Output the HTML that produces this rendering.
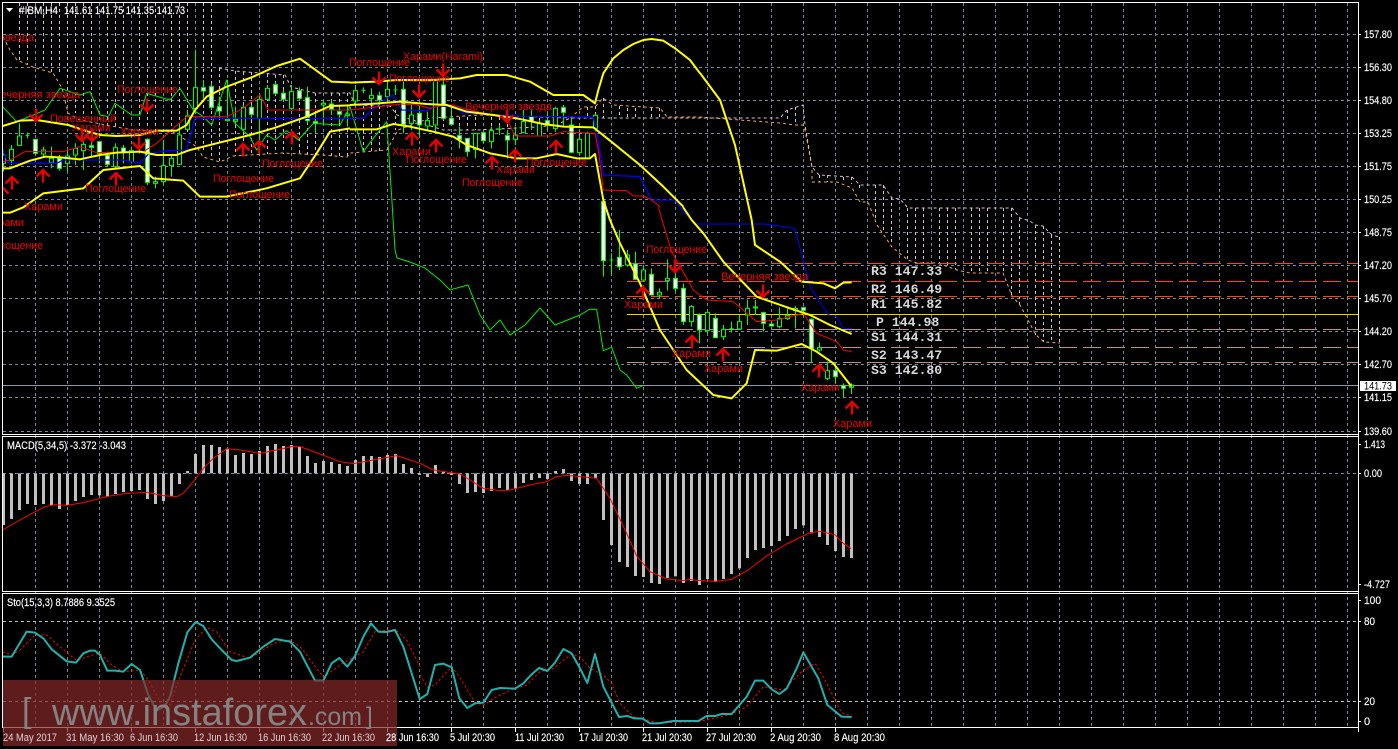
<!DOCTYPE html>
<html><head><meta charset="utf-8"><title>IBM H4</title>
<style>
html,body{margin:0;padding:0;background:#000;width:1398px;height:749px;overflow:hidden}
svg{display:block;position:absolute;left:0;top:0}
text{font-family:"Liberation Sans","Noto Sans CJK JP",sans-serif}
.p{fill:#fff;font-size:11px;stroke:#fff;stroke-width:.15px}
.r{fill:#f00000;font-size:11px}
.m{font-family:"Liberation Mono",monospace;font-weight:bold;font-size:13.2px;fill:#d8d8d8;white-space:pre}
</style></head><body>
<svg width="1398" height="749" viewBox="0 0 1398 749" xmlns="http://www.w3.org/2000/svg">
<defs>
<clipPath id="c1"><rect x="3" y="3" width="1355" height="431"/></clipPath>
<path id="u" d="M0-6.5V6.5M-6.5 .5L0-6L6.5 .5"/>
<path id="d" d="M0 6.5V-6.5M-6.5 -.5L0 6L6.5 -.5"/>
</defs>
<rect width="1398" height="749" fill="#000"/>

<!-- grid -->
<g fill="none" stroke="#778899" stroke-width="1" stroke-dasharray="3 3" shape-rendering="crispEdges">
<path d="M35.5 3V727M67.5 3V727M99.5 3V727M131.5 3V727M163.5 3V727M195.5 3V727M227.5 3V727M259.5 3V727M291.5 3V727M323.5 3V727M355.5 3V727M387.5 3V727M419.5 3V727M451.5 3V727M483.5 3V727M515.5 3V727M547.5 3V727M579.5 3V727M611.5 3V727M643.5 3V727M675.5 3V727M707.5 3V727M739.5 3V727M771.5 3V727M803.5 3V727M835.5 3V727M867.5 3V727M899.5 3V727M931.5 3V727M963.5 3V727M995.5 3V727M1027.5 3V727M1059.5 3V727M1091.5 3V727M1123.5 3V727M1155.5 3V727M1187.5 3V727M1219.5 3V727M1251.5 3V727M1283.5 3V727M1315.5 3V727M1347.5 3V727"/>
<path d="M3 34.5H1358M3 67.5H1358M3 100.5H1358M3 133.5H1358M3 166.5H1358M3 199.5H1358M3 232.5H1358M3 265.5H1358M3 298.5H1358M3 331.5H1358M3 364.5H1358M3 397.5H1358M3 431.5H1358M3 473.5H1358"/>
<path d="M3 621.5H1358M3 701.5H1358" stroke="#c0c0c0"/>
</g>

<g clip-path="url(#c1)">
<!-- cloud hatches -->
<path fill="none" stroke="#d8bfd8" stroke-width="1" stroke-dasharray="3 3" shape-rendering="crispEdges" d="M19.5 3V60M27.5 3V64M43.5 3V69M51.5 3V72M59.5 3V75M67.5 3V90M75.5 3V113M83.5 3V118M91.5 3V122M107.5 3V126M115.5 3V127M123.5 3V128M139.5 3V130M147.5 3V131M155.5 3V132M171.5 3V132M179.5 3V133M187.5 3V134M203.5 3V150M211.5 3V157M219.5 68V162M235.5 71V156M243.5 72V155M251.5 72V154M267.5 74V154M275.5 75V154M283.5 75V154M299.5 90V154M307.5 92V155M315.5 93V155M331.5 93V157M339.5 93V157M347.5 93V157M363.5 106V153M371.5 106V152M379.5 106V151M395.5 110V130M403.5 115V128M411.5 117V130M427.5 117V130M435.5 117V130M443.5 118V130M459.5 117V130M467.5 117V130M475.5 117V130M491.5 117V130M499.5 117V130M507.5 118V130M523.5 117V128M531.5 118V128M539.5 118V127M555.5 118V125M563.5 118V123M571.5 117V120M587.5 107V118M595.5 100V118M603.5 98V118M619.5 106V118M627.5 108V118M635.5 108V118M651.5 108V118M659.5 108V118M787.5 110V122M795.5 107V125M819.5 175V182M827.5 175V182M843.5 177V183M851.5 177V184M859.5 185V190M875.5 185V222M883.5 185V232M891.5 197V245M907.5 208V260M915.5 208V263M923.5 208V263M939.5 208V264M947.5 208V266M955.5 208V269M971.5 208V273M979.5 208V273M987.5 208V273M1003.5 208V273M1011.5 208V296M1019.5 218V308M1035.5 225V335M1043.5 226V342M1051.5 235V342M1059.5 237V343"/>
<polyline fill="none" stroke="#f4a460" stroke-width="1" stroke-dasharray="3 3" points="3,37 10,50 17,60 33,67 53,73 62,88 68,113 80,120 133,130 173,132 197,147 203,157 220,162 233,156 283,153 323,155 347,157 350,153 387,150 398,130 430,118 480,115 570,118 583,107 595,107 603,98 613,105 660,108 667,117 700,117 780,123 795,125 803,125 805,130 812,167 812,182 837,182 852,188 860,202 868,202 877,225 892,247 908,260 917,263 937,263 957,270 970,273 1003,273 1012,296 1020,305 1036,335 1044,342 1060,343"/>
<polyline fill="none" stroke="#d8bfd8" stroke-width="1" stroke-dasharray="3 3" points="219,68 235,71 285,75 291,87 315,93 350,93 355,105 390,106 397,115 443,130 477,130 537,127 557,125 570,118 780,118 787,110 803,105 805,125 812,167 819,175 852,177 860,185 883,185 892,198 900,199 908,208 1012,208 1020,218 1030,221 1035,225 1043,226 1052,235 1059,237"/>

<!-- pivot levels -->
<g fill="none" stroke-width="1" shape-rendering="crispEdges" stroke-dasharray="18 6">
<path stroke="#ff4500" d="M627 263.5H1358M627 281.5H1358M627 296.5H1358"/>
<path stroke="#bc8f8f" d="M627 329.5H1358M627 347.5H1358M627 362.5H1358"/>
</g>
<path d="M627 314.5H1358" stroke="#ffcc00" stroke-width="1" shape-rendering="crispEdges"/>
<path d="M3 385.5H1358" stroke="#8b98a6" stroke-width="1" shape-rendering="crispEdges"/>

<!-- candles 1 -->
<g transform="translate(.17,0) scale(.33333)" stroke="#00ff00" stroke-width="3" fill="none">
<path d="M10 450V515M34 435V495M58 370V436M82 398V415M106 418V465M130 440V470M154 440V505M178 465V512M202 450V515M226 430V495M250 425V510M274 418V470M298 425V490M322 455V500M346 430V505M370 435V490M394 440V490M418 420V460M442 415V555M466 530V565M490 420V555M514 465V530M538 370V495M562 330V390M586 150V340M610 240V295M634 250V330M658 290V360M682 240V365M706 320V375M730 315V395M754 315V360M778 285V420M802 255V300M826 245V285M850 270V305M874 255V330M898 262V300M922 260V370M946 340V400M970 300V375M994 300V345M1018 320V370M1042 320V380"/>
<path fill="#fff" d="M100 418h12v42h-12zM172 475h12v30h-12zM268 437h12v5h-12zM292 425h12v35h-12zM316 466h12v27h-12zM364 444h12v12h-12zM436 418h12v129h-12zM604 263h12v10h-12zM628 260h12v62h-12zM652 320h12v13h-12zM748 322h12v21h-12zM820 254h12v26h-12zM844 280h12v18h-12zM892 272h12v23h-12zM916 293h12v69h-12zM940 365h12v5h-12zM988 312h12v15h-12zM1012 335h12v8h-12z"/>
<path fill="#000" d="M4 465h12v25h-12zM28 448h12v34h-12zM52 408h12v28h-12zM76 406h12M124 450h12v12h-12zM148 475h12v13h-12zM196 468h12v22h-12zM220 445h12v20h-12zM244 433h12v19h-12zM340 443h12v57h-12zM388 452h12v33h-12zM412 455h12M460 545h12v5h-12zM484 497h12v48h-12zM508 475h12v22h-12zM532 405h12v88h-12zM556 348h12v40h-12zM580 263h12v62h-12zM676 358h12v4h-12zM700 358h12v6h-12zM724 322h12v66h-12zM772 298h12v57h-12zM796 265h12v33h-12zM868 275h12v50h-12zM964 310h12v5h-12zM1036 342h12v5h-12z"/>
</g>
<!-- candles 2 -->
<g transform="translate(350.5,30) scale(.33333)" stroke="#00ff00" stroke-width="3" fill="none">
<path d="M15 165V225M39 172V190M63 175V225M87 185V225M111 150V215M135 165V195M159 150V310M183 225V300M207 225V320M231 245V300M255 150V305M279 130V270M303 230V285M327 290V355M351 325V380M375 310V385M399 300V340M423 290V355M447 285V315M471 300V385M495 290V345M519 240V310M543 240V300M567 270V320M591 250V300M615 230V305M639 225V290M663 265V370M687 305V375M711 305V385M735 250V305"/>
<path fill="#fff" d="M81 197h12v13h-12zM153 178h12v105h-12zM201 250h12v35h-12zM273 165h12v100h-12zM297 265h12v18h-12zM321 317h12v11h-12zM345 325h12v40h-12zM393 308h12v24h-12zM465 317h12v13h-12zM537 260h12v15h-12zM585 272h12v13h-12zM633 233h12v14h-12zM657 285h12v82h-12z"/>
<path fill="#000" d="M9 182h12v31h-12zM33 181h12M57 197h12v8h-12zM105 178h12v22h-12zM129 180h12M177 255h12v25h-12zM225 272h12v16h-12zM249 152h12v133h-12zM369 310h12v48h-12zM417 302h12v33h-12zM441 298h12M489 315h12v13h-12zM513 275h12v33h-12zM561 280h12v38h-12zM609 235h12v60h-12zM681 328h12v40h-12zM705 310h12v75h-12zM729 256h12v39h-12z"/>
</g>
<!-- candles 3 -->
<g transform="translate(590.5,220) scale(.33333)" stroke="#00ff00" stroke-width="3" fill="none">
<path d="M39 -60V170M63 100V165M87 30V150M111 90V140M135 95V180M159 135V185M183 145V225M207 205V235M231 118V212M255 120V215M279 190V315M303 255V320M327 280V370M351 275V340M375 280V355M399 315V360M423 305V338M447 285V330M471 238V315M495 240V285M519 275V335M543 305V320M567 262V325M591 265V300M615 258V325M639 260V288M663 295V430M687 367V395M711 425V480M735 428V490M759 490V532M783 490V522"/>
<path fill="#fff" d="M33 -55h12v177h-12zM81 112h12v28h-12zM129 132h12v46h-12zM177 163h12v62h-12zM249 175h12v30h-12zM273 205h12v100h-12zM321 285h12v45h-12zM369 295h12v58h-12zM489 261h12v3h-12zM513 278h12v32h-12zM537 312h12v6h-12zM633 263h12v8h-12zM657 298h12v87h-12zM729 452h12v18h-12zM753 497h12v8h-12z"/>
<path fill="#000" d="M57 120h12M105 105h12v30h-12zM153 150h12v30h-12zM201 217h12v8h-12zM225 175h12v7h-12zM297 260h12v45h-12zM345 277h12v55h-12zM393 328h12v22h-12zM417 326h12M441 305h12v22h-12zM465 265h12v20h-12zM561 295h12v25h-12zM585 287h12v9h-12zM609 265h12v7h-12zM681 383h12v7h-12zM705 452h12v23h-12zM777 495h12v7h-12z"/>
</g>

<!-- chikou, red, blue lines + bands : section 1 -->
<g transform="scale(.33333)" fill="none" stroke-linejoin="round">
<polyline stroke="#00ee00" stroke-width="3" points="8,320 50,365 100,345 135,330 180,265 240,285 270,275 300,345 325,350 345,310 395,345 420,345 440,280 510,300 540,265 580,330 610,350 635,375 680,240 705,370 750,410 770,450 800,405 825,420 860,392 895,420 940,370 1020,375 1050,320"/>
<polyline stroke="#0000ff" stroke-width="4" points="8,450 25,490 170,490 190,480 370,480 420,490 445,462 500,452 560,450 585,355 1050,355"/>
<polyline stroke="#ff0000" stroke-width="3" points="8,485 30,480 75,455 190,455 240,440 290,458 430,455 470,430 560,350 680,350 730,325 780,285 805,330 1050,330"/>
<polyline stroke="#ffff00" stroke-width="6" points="8,378 60,362 110,360 160,368 205,375 250,390 300,405 350,408 420,405 470,392 530,392 560,375 585,330 620,290 680,260 760,230 830,198 900,176 940,205 995,245 1050,247"/>
<polyline stroke="#ffff00" stroke-width="6" points="8,505 30,505 90,482 135,470 180,472 240,478 300,465 350,458 420,455 470,465 530,465 570,450 650,430 750,405 820,385 920,350 990,318 1050,316"/>
<polyline stroke="#ffff00" stroke-width="6" points="8,638 30,638 70,622 130,580 250,565 310,510 420,498 460,535 550,542 600,590 680,590 800,565 900,535 950,460 990,395 1050,385"/>
</g>
<!-- section 2 -->
<g transform="translate(350,30) scale(.33333)" fill="none" stroke-linejoin="round">
<polyline stroke="#00ee00" stroke-width="3" points="0,230 40,365 70,325 110,275 125,500 135,660"/>
<polyline stroke="#0000ff" stroke-width="4" points="0,265 40,265 70,235 110,205 130,195 155,240 230,242 260,228 310,230 340,250 500,258 730,262 745,330 760,435 870,440 905,510 975,510 1005,550 1040,582"/>
<polyline stroke="#ff0000" stroke-width="3" points="0,240 155,222 200,225 240,235 280,225 310,225 340,235 470,265 495,318 600,318 640,305 735,310 745,360 760,480 830,482 850,498 880,498 905,510 930,530"/>
<polyline stroke="#ffff00" stroke-width="6" points="0,158 80,155 140,150 240,150 330,145 380,135 470,135 540,155 610,195 700,195 735,220 745,180 760,130 790,85 820,60 850,42 880,30 905,27 940,32 975,55 1020,90 1050,130"/>
<polyline stroke="#ffff00" stroke-width="6" points="0,225 60,222 150,215 230,222 290,225 350,245 430,255 500,265 580,282 640,290 730,292 790,340 870,405 940,470 1000,530"/>
<polyline stroke="#ffff00" stroke-width="6" points="0,298 80,298 130,282 180,290 250,305 310,320 350,345 420,370 500,385 560,385 620,372 680,385 720,385 735,372 760,510 780,570"/>
</g>
<polyline fill="none" stroke="#ffff00" stroke-width="2" points="700,73 720,100 735,145 745,190 751.7,220"/>
<polyline fill="none" stroke="#00ee00" stroke-width="1" points="395,250 397,258 410,262 425,268 440,280 450,290 468,285 480,315 490,330 500,320 510,335 525,325 540,308 555,325 580,315 590,309"/>
<!-- section 3 -->
<g transform="translate(590,220) scale(.33333)" fill="none" stroke-linejoin="round">
<polyline stroke="#00ee00" stroke-width="3" points="0,268 20,268 40,392 65,382 90,450 110,465 140,505 158,497"/>
<polyline stroke="#0000ff" stroke-width="3" points="320,12 525,12 615,25 660,200 715,285 740,290 760,325 785,325"/>
<polyline stroke="#ff0000" stroke-width="3" points="205,-40 216,0 245,95 310,210 350,240 430,245 500,305 560,300 640,280 680,340 740,365 760,390 785,395"/>
<polyline stroke="#ffff00" stroke-width="6" points="485,0 495,75 570,125 635,185 700,190 735,205 760,188 785,187"/>
<polyline stroke="#ffff00" stroke-width="6" points="279,-39 305,0 340,40 400,125 500,230 600,265 660,285 720,315 785,342"/>
<polyline stroke="#ffff00" stroke-width="6" points="60,0 90,70 150,190 210,330 290,450 370,525 425,535 470,490 495,390 560,392 635,372 680,395 730,430 785,500"/>
</g>

<!-- arrows -->
<g fill="none" stroke="#e80000" stroke-width="2.4">
<use href="#u" x="12" y="183"/><use href="#u" x="2" y="193"/><use href="#u" x="43" y="176"/><use href="#u" x="116" y="179"/><use href="#u" x="243" y="150"/><use href="#u" x="259" y="147"/><use href="#u" x="292" y="138"/>
<use href="#d" x="36" y="115"/><use href="#d" x="82" y="135"/><use href="#d" x="92" y="135"/><use href="#d" x="139" y="143"/><use href="#d" x="147" y="105"/>
<use href="#d" x="379" y="78"/><use href="#d" x="419" y="91"/><use href="#d" x="443" y="70"/><use href="#d" x="507" y="116"/>
<use href="#u" x="412" y="139"/><use href="#u" x="436" y="146"/><use href="#u" x="492" y="163"/><use href="#u" x="515" y="156"/><use href="#u" x="556" y="147"/>
<use href="#d" x="675" y="266"/><use href="#d" x="763" y="291"/>
<use href="#u" x="643" y="293"/><use href="#u" x="692" y="342"/><use href="#u" x="723" y="355"/><use href="#u" x="819" y="371"/><use href="#u" x="852" y="408"/>
</g>

<!-- pattern labels -->
<g class="r">
<text class="r" x="-53" y="41" textLength="87" lengthAdjust="spacingAndGlyphs">Вечерняя звезда</text>
<text class="r" x="-7" y="98" textLength="87" lengthAdjust="spacingAndGlyphs">Вечерняя звезда</text>
<text class="r" x="117" y="93" textLength="61" lengthAdjust="spacingAndGlyphs">Поглощение</text>
<text class="r" x="50" y="122" textLength="66" lengthAdjust="spacingAndGlyphs">Повешенный</text>
<text class="r" x="72" y="131" textLength="39" lengthAdjust="spacingAndGlyphs">Харами</text>
<text class="r" x="120" y="135" textLength="39" lengthAdjust="spacingAndGlyphs">Харами</text>
<text class="r" x="85" y="192" textLength="61" lengthAdjust="spacingAndGlyphs">Поглощение</text>
<text class="r" x="24" y="210" textLength="39" lengthAdjust="spacingAndGlyphs">Харами</text>
<text class="r" x="-15" y="226" textLength="39" lengthAdjust="spacingAndGlyphs">Харами</text>
<text class="r" x="-18" y="249" textLength="61" lengthAdjust="spacingAndGlyphs">Поглощение</text>
<text class="r" x="213" y="182" textLength="61" lengthAdjust="spacingAndGlyphs">Поглощение</text>
<text class="r" x="229" y="198" textLength="61" lengthAdjust="spacingAndGlyphs">Поглощение</text>
<text class="r" x="262" y="167" textLength="61" lengthAdjust="spacingAndGlyphs">Поглощение</text>
<text class="r" x="349" y="66" textLength="61" lengthAdjust="spacingAndGlyphs">Поглощение</text>
<text class="r" x="403" y="60" textLength="80" lengthAdjust="spacingAndGlyphs">Харами(Harami)</text>
<text class="r" x="389" y="82" textLength="61" lengthAdjust="spacingAndGlyphs">Поглощение</text>
<text class="r" x="465" y="110" textLength="87" lengthAdjust="spacingAndGlyphs">Вечерняя звезда</text>
<text class="r" x="392" y="155" textLength="39" lengthAdjust="spacingAndGlyphs">Харами</text>
<text class="r" x="406" y="163" textLength="61" lengthAdjust="spacingAndGlyphs">Поглощение</text>
<text class="r" x="496" y="173" textLength="39" lengthAdjust="spacingAndGlyphs">Харами</text>
<text class="r" x="462" y="186" textLength="61" lengthAdjust="spacingAndGlyphs">Поглощение</text>
<text class="r" x="526" y="166" textLength="61" lengthAdjust="spacingAndGlyphs">Поглощение</text>
<text class="r" x="646" y="253" textLength="61" lengthAdjust="spacingAndGlyphs">Поглощение</text>
<text class="r" x="721" y="280" textLength="87" lengthAdjust="spacingAndGlyphs">Вечерняя звезда</text>
<text class="r" x="624" y="308" textLength="39" lengthAdjust="spacingAndGlyphs">Харами</text>
<text class="r" x="672" y="357" textLength="39" lengthAdjust="spacingAndGlyphs">Харами</text>
<text class="r" x="704" y="372" textLength="39" lengthAdjust="spacingAndGlyphs">Харами</text>
<text class="r" x="801" y="391" textLength="39" lengthAdjust="spacingAndGlyphs">Харами</text>
<text class="r" x="833" y="427" textLength="39" lengthAdjust="spacingAndGlyphs">Харами</text>
</g>

<!-- pivot text -->
<text class="m" x="871" y="275">R3 147.33</text>
<text class="m" x="871" y="293">R2 146.49</text>
<text class="m" x="871" y="308">R1 145.82</text>
<text class="m" x="876" y="326">P 144.98</text>
<text class="m" x="871" y="341">S1 144.31</text>
<text class="m" x="871" y="359">S2 143.47</text>
<text class="m" x="871" y="374">S3 142.80</text>
</g>

<!-- MACD bars -->
<g transform="translate(.17,430) scale(.33333)" stroke="#c0c0c0" stroke-width="9" fill="none">
<path d="M10 130V285M34 130V267M58 130V240M82 130V222M106 130V225M130 130V222M154 130V226M178 130V237M202 130V226M226 130V213M250 130V201M274 130V195M298 130V196M322 130V200M346 130V192M370 130V186M394 130V183M418 130V180M442 130V207M466 130V222M490 130V213M514 130V198M538 130V162M562 130V123M586 130V72M610 130V45M634 130V45M658 130V51M682 130V57M706 130V75M730 130V69M754 130V72M778 130V63M802 130V48M826 130V42M850 130V48M874 130V45M898 130V51M922 130V78M946 130V99M970 130V93M994 130V96M1018 130V102M1042 130V108M1066 130V90M1090 130V78M1114 130V78M1138 130V81M1162 130V75M1186 130V72M1210 130V102M1234 130V114M1258 130V135"/>
</g>
<g transform="translate(420.5,430) scale(.33333)" stroke="#c0c0c0" stroke-width="9" fill="none">
<path d="M21 130V141M45 130V105M69 130V123M93 130V135M117 130V162M141 130V189M165 130V186M189 130V189M213 130V183M237 130V174M261 130V180M285 130V177M309 130V159M333 130V150M357 130V144M381 130V147M405 130V123M429 130V117M453 130V153M477 130V162M501 130V162M525 130V145M549 130V270M573 130V345M597 130V396M621 130V411M645 130V438M669 130V441M693 130V459M717 130V462M741 130V444M765 130V439M789 130V459M813 130V453M837 130V465M861 130V447M885 130V456M909 130V447M933 130V432M957 130V415M981 130V384M1005 130V360M1029 130V354M1053 130V348M1077 130V333M1101 130V318M1125 130V297M1149 130V286M1173 130V310M1197 130V321M1221 130V345M1245 130V363M1269 130V381M1293 130V384"/>
</g>
<g fill="none" stroke="#ff0000" stroke-width="3">
<polyline transform="translate(0,430) scale(.33333)" points="8,300 60,270 100,248 135,230 165,224 200,226 250,218 300,205 330,198 380,190 440,187 490,197 530,200 550,190 580,155 610,115 640,85 680,56 720,60 780,70 830,60 880,49 900,50 960,72 1020,95 1060,101 1110,92 1190,77 1260,100"/>
<polyline transform="translate(420,430) scale(.33333)" points="0,100 40,120 120,132 150,150 190,175 240,182 270,180 330,165 380,155 410,140 440,136 480,140 530,145 570,205 620,310 650,378 690,425 740,447 790,452 810,448 830,451 885,454 935,448 985,420 1040,378 1100,342 1170,308 1200,304 1245,314 1270,340 1293,356"/>
</g>

<!-- Stochastic -->
<g fill="none">
<g stroke="#ff0000" stroke-width="3" stroke-dasharray="7 7">
<polyline transform="translate(0,590) scale(.33333)" points="8,185 35,195 60,180 105,135 140,135 180,170 230,212 270,197 300,190 335,225 370,245 420,240 445,270 480,335 510,345 540,260 585,150 620,113 650,125 690,185 750,205 820,160 870,150 905,175 970,262 1020,225 1090,185 1125,125 1185,118 1220,150 1260,230"/>
<polyline transform="translate(420,590) scale(.33333)" points="0,255 22,292 45,285 95,230 118,260 165,338 190,345 230,320 285,295 320,285 360,245 400,235 455,192 480,200 510,235 550,255 575,280 600,340 640,380 670,386 710,398 760,398 835,395 885,385 935,372 980,350 1030,290 1090,300 1150,240 1185,220 1215,270 1245,330 1265,368 1295,378"/>
</g>
<g stroke="#20b2aa" stroke-width="6" stroke-linejoin="round">
<polyline transform="translate(0,590) scale(.33333)" points="8,200 35,200 80,125 105,128 130,145 155,178 200,214 228,218 250,190 270,182 285,182 300,195 322,242 345,242 370,245 395,222 420,240 445,315 470,362 495,348 510,320 535,220 562,127 587,96 610,108 635,148 665,180 695,210 710,213 750,203 790,170 825,147 870,155 900,185 945,272 970,272 995,220 1018,204 1042,230 1065,198 1090,140 1113,100 1135,125 1160,126 1185,120 1210,170 1235,250 1260,330"/>
<polyline transform="translate(420,590) scale(.33333)" points="0,327 22,312 45,225 70,221 95,232 118,325 142,354 165,340 190,338 215,300 240,294 285,296 310,280 335,253 357,234 382,243 405,218 430,177 455,190 480,235 502,279 525,192 550,290 597,381 622,378 642,385 668,386 690,400 715,400 760,393 835,393 860,378 885,378 905,372 935,372 980,320 1005,272 1030,272 1055,298 1078,312 1100,296 1130,235 1150,187 1195,265 1222,345 1265,380 1295,381"/>
</g>
</g>

<!-- frames -->
<g fill="none" stroke="#fff" stroke-width="1" shape-rendering="crispEdges">
<rect x="2.5" y="2.5" width="1356" height="432"/>
<rect x="2.5" y="436.5" width="1356" height="155"/>
<rect x="2.5" y="593.5" width="1356" height="134"/>
<path d="M1358.5 2V732"/>
<path d="M1358 34.5h3M1358 67.5h3M1358 100.5h3M1358 133.5h3M1358 166.5h3M1358 199.5h3M1358 232.5h3M1358 265.5h3M1358 298.5h3M1358 331.5h3M1358 364.5h3M1358 397.5h3M1358 431.5h3M1358 473.5h3M1358 444.5h3M1358 584.5h3M1358 600.5h3M1358 621.5h3M1358 701.5h3M1358 721.5h3"/>
<path d="M3.5 728v4M67.5 728v4M131.5 728v4M195.5 728v4M259.5 728v4M323.5 728v4M387.5 728v4M451.5 728v4M515.5 728v4M579.5 728v4M643.5 728v4M707.5 728v4M771.5 728v4M835.5 728v4"/>
</g>

<!-- header labels -->
<path d="M6 8h7l-3.5 4z" fill="#fff"/>
<text class="p" x="19" y="14" textLength="39" lengthAdjust="spacingAndGlyphs">#IBM,H4</text>
<text class="p" x="64" y="14" textLength="121" lengthAdjust="spacingAndGlyphs">141.61 141.75 141.35 141.73</text>
<text class="p" x="7" y="449" textLength="119" lengthAdjust="spacingAndGlyphs">MACD(5,34,5) -3.372 -3.043</text>
<text class="p" x="7" y="606" textLength="108" lengthAdjust="spacingAndGlyphs">Sto(15,3,3) 8.7886 9.3525</text>

<!-- price axis -->
<g>
<text class="p" x="1364" y="38" textLength="28" lengthAdjust="spacingAndGlyphs">157.80</text>
<text class="p" x="1364" y="71" textLength="28" lengthAdjust="spacingAndGlyphs">156.30</text>
<text class="p" x="1364" y="104" textLength="28" lengthAdjust="spacingAndGlyphs">154.80</text>
<text class="p" x="1364" y="137" textLength="28" lengthAdjust="spacingAndGlyphs">153.25</text>
<text class="p" x="1364" y="170" textLength="28" lengthAdjust="spacingAndGlyphs">151.75</text>
<text class="p" x="1364" y="203" textLength="28" lengthAdjust="spacingAndGlyphs">150.25</text>
<text class="p" x="1364" y="236" textLength="28" lengthAdjust="spacingAndGlyphs">148.75</text>
<text class="p" x="1364" y="269" textLength="28" lengthAdjust="spacingAndGlyphs">147.20</text>
<text class="p" x="1364" y="302" textLength="28" lengthAdjust="spacingAndGlyphs">145.70</text>
<text class="p" x="1364" y="335" textLength="28" lengthAdjust="spacingAndGlyphs">144.20</text>
<text class="p" x="1364" y="368" textLength="28" lengthAdjust="spacingAndGlyphs">142.70</text>
<text class="p" x="1364" y="401" textLength="28" lengthAdjust="spacingAndGlyphs">141.15</text>
<text class="p" x="1364" y="435" textLength="28" lengthAdjust="spacingAndGlyphs">139.60</text>
<rect x="1360" y="381" width="36" height="10" fill="#fff"/>
<text x="1364" y="389.5" font-size="11" fill="#000" textLength="28" lengthAdjust="spacingAndGlyphs">141.73</text>
<text class="p" x="1364" y="448" textLength="21" lengthAdjust="spacingAndGlyphs">1.413</text>
<text class="p" x="1364" y="477" textLength="18" lengthAdjust="spacingAndGlyphs">0.00</text>
<text class="p" x="1364" y="588" textLength="26" lengthAdjust="spacingAndGlyphs">-4.727</text>
<text class="p" x="1364" y="604" textLength="17" lengthAdjust="spacingAndGlyphs">100</text>
<text class="p" x="1364" y="625" textLength="11" lengthAdjust="spacingAndGlyphs">80</text>
<text class="p" x="1364" y="705" textLength="11" lengthAdjust="spacingAndGlyphs">20</text>
<text class="p" x="1364" y="725" textLength="6">0</text>
</g>

<!-- watermark -->
<rect x="3" y="680" width="394" height="66" fill="#862828" fill-opacity=".7"/>
<text x="52" y="725" font-size="38" fill="#868282" textLength="255" lengthAdjust="spacingAndGlyphs">www.instaforex</text>
<text x="308" y="725" font-size="25" fill="#868282" textLength="54" lengthAdjust="spacingAndGlyphs">.com</text>
<text x="22" y="722" font-size="34" fill="#868282">[</text>
<text x="366" y="724" font-size="24" fill="#868282">]</text>

<!-- time axis -->
<g>
<text class="p" x="3" y="741" textLength="54" lengthAdjust="spacingAndGlyphs" style="fill:#e0d2d2;stroke:none">24 May 2017</text>
<text class="p" x="66" y="741" textLength="58" lengthAdjust="spacingAndGlyphs" style="fill:#e0d2d2;stroke:none">31 May 16:30</text>
<text class="p" x="130" y="741" textLength="48" lengthAdjust="spacingAndGlyphs" style="fill:#e0d2d2;stroke:none">6 Jun 16:30</text>
<text class="p" x="194" y="741" textLength="53" lengthAdjust="spacingAndGlyphs" style="fill:#e0d2d2;stroke:none">12 Jun 16:30</text>
<text class="p" x="258" y="741" textLength="53" lengthAdjust="spacingAndGlyphs" style="fill:#e0d2d2;stroke:none">16 Jun 16:30</text>
<text class="p" x="322" y="741" textLength="53" lengthAdjust="spacingAndGlyphs" style="fill:#e0d2d2;stroke:none">22 Jun 16:30</text>
<text class="p" x="386" y="741" textLength="53" lengthAdjust="spacingAndGlyphs">28 Jun 16:30</text>
<text class="p" x="450" y="741" textLength="45" lengthAdjust="spacingAndGlyphs">5 Jul 20:30</text>
<text class="p" x="515" y="741" textLength="49" lengthAdjust="spacingAndGlyphs">11 Jul 20:30</text>
<text class="p" x="579" y="741" textLength="49" lengthAdjust="spacingAndGlyphs">17 Jul 20:30</text>
<text class="p" x="642" y="741" textLength="50" lengthAdjust="spacingAndGlyphs">21 Jul 20:30</text>
<text class="p" x="706" y="741" textLength="50" lengthAdjust="spacingAndGlyphs">27 Jul 20:30</text>
<text class="p" x="770" y="741" textLength="51" lengthAdjust="spacingAndGlyphs">2 Aug 20:30</text>
<text class="p" x="834" y="741" textLength="51" lengthAdjust="spacingAndGlyphs">8 Aug 20:30</text>
</g>
</svg>
</body></html>
